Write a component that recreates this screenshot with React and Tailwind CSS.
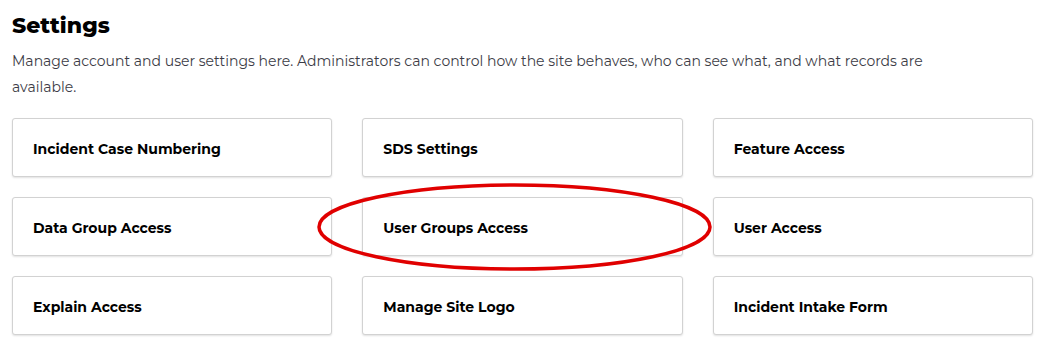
import React from "react";

const items = [
  "Incident Case Numbering",
  "SDS Settings",
  "Feature Access",
  "Data Group Access",
  "User Groups Access",
  "User Access",
  "Explain Access",
  "Manage Site Logo",
  "Incident Intake Form",
];

export default function App() {
  return (
    <div
      className="relative w-[1048px] h-[361px] overflow-hidden bg-white px-[12px] pt-[10px]"
      style={{ fontFamily: '"Montserrat", "Noto Sans", "Open Sans", sans-serif' }}
    >
      <h1 className="text-[22px] leading-[32px] font-extrabold text-black">Settings</h1>
      <p className="mt-[6px] max-w-[935px] text-[14px] leading-[26px] text-[#3c3c46]">
        Manage account and user settings here. Administrators can control how the site behaves, who can see what, and what records are available.
      </p>
      <div className="mt-[18px] grid grid-cols-3 gap-x-[30px] gap-y-[20px] w-[1021px]">
        {items.map((t) => (
          <div
            key={t}
            className="h-[59px] flex items-center pl-[20px] pt-[3px] rounded-[3px] border border-[#d2d2d2] bg-white shadow-[0_1px_2px_rgba(0,0,0,0.12)] text-[14px] font-bold text-black"
          >
            {t}
          </div>
        ))}
      </div>
      <svg
        className="absolute left-0 top-0 pointer-events-none"
        width="1048"
        height="361"
        viewBox="0 0 1048 361"
      >
        <ellipse cx="514.5" cy="227" rx="195.5" ry="42" fill="none" stroke="#e00000" strokeWidth="3.5" />
      </svg>
    </div>
  );
}
